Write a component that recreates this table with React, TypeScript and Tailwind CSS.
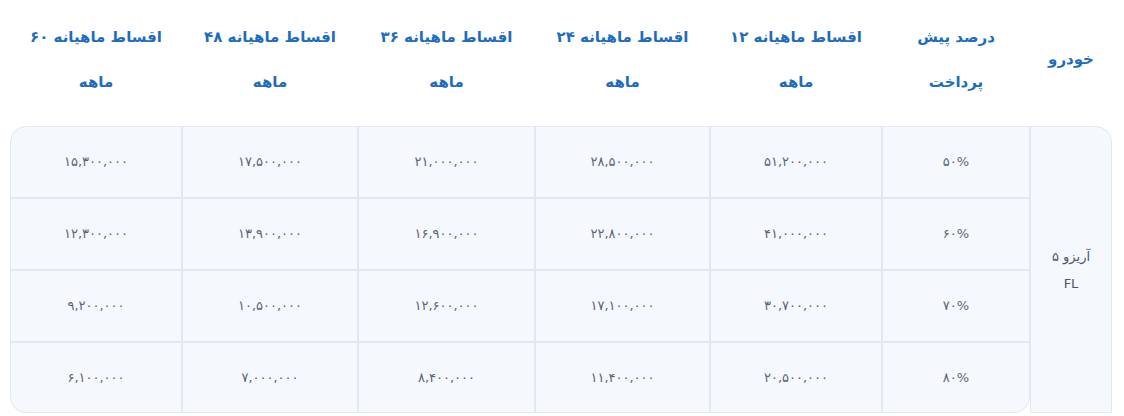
const headers: { lines: string[]; w: string }[] = [
  { lines: ["خودرو"], w: "w-[82px]" },
  { lines: ["درصد پیش", "پرداخت"], w: "w-[148px]" },
  { lines: ["اقساط ماهیانه ۱۲", "ماهه"], w: "w-[172px]" },
  { lines: ["اقساط ماهیانه ۲۴", "ماهه"], w: "w-[175px]" },
  { lines: ["اقساط ماهیانه ۳۶", "ماهه"], w: "w-[177px]" },
  { lines: ["اقساط ماهیانه ۴۸", "ماهه"], w: "w-[176px]" },
  { lines: ["اقساط ماهیانه ۶۰", "ماهه"], w: "w-[172px]" },
]

const rows: string[][] = [
  ["۵۰%", "۵۱,۲۰۰,۰۰۰", "۲۸,۵۰۰,۰۰۰", "۲۱,۰۰۰,۰۰۰", "۱۷,۵۰۰,۰۰۰", "۱۵,۳۰۰,۰۰۰"],
  ["۶۰%", "۴۱,۰۰۰,۰۰۰", "۲۲,۸۰۰,۰۰۰", "۱۶,۹۰۰,۰۰۰", "۱۳,۹۰۰,۰۰۰", "۱۲,۳۰۰,۰۰۰"],
  ["۷۰%", "۳۰,۷۰۰,۰۰۰", "۱۷,۱۰۰,۰۰۰", "۱۲,۶۰۰,۰۰۰", "۱۰,۵۰۰,۰۰۰", "۹,۲۰۰,۰۰۰"],
  ["۸۰%", "۲۰,۵۰۰,۰۰۰", "۱۱,۴۰۰,۰۰۰", "۸,۴۰۰,۰۰۰", "۷,۰۰۰,۰۰۰", "۶,۱۰۰,۰۰۰"],
]

export default function App() {
  return (
    <div className="bg-white w-[1124px] h-[416px] pr-[12px] font-['DejaVu_Sans',sans-serif]" dir="rtl">
      <table className="table-fixed w-[1102px] border-separate border-spacing-0">
        <thead>
          <tr>
            {headers.map((h, i) => (
              <th
                key={i}
                className={`${h.w} h-[126px] pb-[7px] align-middle text-center font-bold text-[15px] leading-[45px] text-[#1d6cc0]`}
              >
                {h.lines.map((l, j) => (
                  <div key={j}>{l}</div>
                ))}
              </th>
            ))}
          </tr>
        </thead>
        <tbody>
          {rows.map((r, ri) => (
            <tr key={ri}>
              {ri === 0 && (
                <td
                  rowSpan={4}
                  className="bg-[#f5f8fd] border border-[#e1e8f2] rounded-tr-2xl text-center align-middle text-[13px] leading-[27px] text-[#4f5668]"
                >
                  <div>آریزو ۵</div>
                  <div>FL</div>
                </td>
              )}
              {r.map((v, ci) => {
                let corner = ""
                if (ri === 0 && ci === 5) corner = "rounded-tl-2xl"
                if (ri === 3 && ci === 5) corner = "rounded-bl-2xl"
                if (ri === 3 && ci === 0) corner = "rounded-br-2xl"
                return (
                  <td
                    key={ci}
                    className={`${corner} ${ri === 3 ? "h-[71px]" : "h-[72px]"} bg-[#f5f8fd] border border-[#e1e8f2] text-center align-middle text-[13px] text-[#5d6477]`}
                  >
                    {v}
                  </td>
                )
              })}
            </tr>
          ))}
        </tbody>
      </table>
    </div>
  )
}
